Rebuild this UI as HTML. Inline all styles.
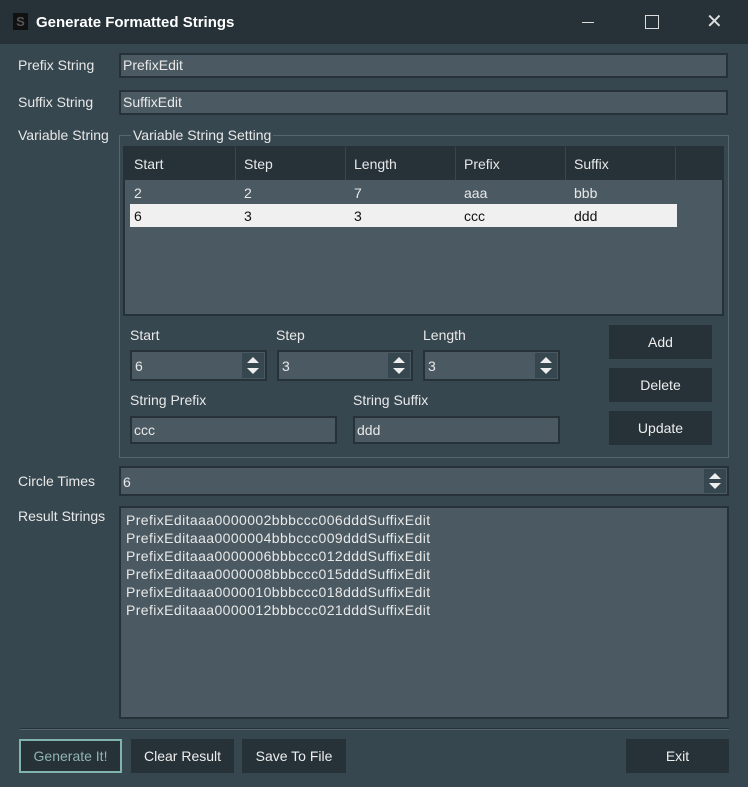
<!DOCTYPE html>
<html><head><meta charset="utf-8"><style>
*{box-sizing:border-box;margin:0;padding:0}
body{width:748px;height:787px;background:#37474f;font-family:"Liberation Sans",sans-serif;font-size:14px;color:#e8e8e8;position:relative;overflow:hidden}
.a{position:absolute}
.t{position:absolute;white-space:nowrap;line-height:16px}
.in{position:absolute;background:#4b5a62;border:2px solid #263238;padding-left:2px;line-height:21px}
.btn{position:absolute;background:#263238;text-align:center;color:#eee}
.spin{position:absolute;background:#4b5a62;border:2px solid #263238}
.arr{position:absolute;top:1px;bottom:1px;right:1px;width:22px;background:#37474f}
.arr:before{content:"";position:absolute;left:5px;top:4px;border-left:6px solid transparent;border-right:6px solid transparent;border-bottom:6px solid #eee}
.arr:after{content:"";position:absolute;left:5px;bottom:4px;border-left:6px solid transparent;border-right:6px solid transparent;border-top:6px solid #eee}
</style></head><body>
<div class="a" style="left:0;top:0;width:748px;height:44px;background:#263238"></div>
<div class="a" style="left:13px;top:13px;width:15px;height:17px;background:#111;color:#555;font-size:13px;font-weight:bold;text-align:center;line-height:17px">S</div>
<div class="t" style="left:36px;top:15px;font-weight:bold;font-size:15px;color:#fff">Generate Formatted Strings</div>
<div class="a" style="left:582px;top:22px;width:12px;height:1px;background:#ddd"></div>
<div class="a" style="left:645px;top:15px;width:14px;height:14px;border:1.5px solid #ddd"></div>
<div class="t" style="left:706px;top:12px;font-size:20px;color:#ddd;line-height:20px;font-weight:300">✕</div>

<div class="t" style="left:18px;top:57px">Prefix String</div>
<div class="in" style="left:119px;top:53px;width:609px;height:25px">PrefixEdit</div>
<div class="t" style="left:18px;top:94px">Suffix String</div>
<div class="in" style="left:119px;top:90px;width:609px;height:25px">SuffixEdit</div>
<div class="t" style="left:18px;top:127px">Variable String</div>

<div class="a" style="left:119px;top:135px;width:610px;height:323px;border:1px solid #56666e"></div>
<div class="t" style="left:131px;top:127px;background:#37474f;padding:0 2px">Variable String Setting</div>

<div class="a" style="left:123px;top:146px;width:601px;height:170px;background:#4b5a62;border:2px solid #263238"></div>
<div class="a" style="left:125px;top:147px;width:597px;height:33px;background:#263238"></div>
<div class="a" style="left:235px;top:147px;width:1px;height:33px;background:#37474f"></div>
<div class="a" style="left:345px;top:147px;width:1px;height:33px;background:#37474f"></div>
<div class="a" style="left:455px;top:147px;width:1px;height:33px;background:#37474f"></div>
<div class="a" style="left:565px;top:147px;width:1px;height:33px;background:#37474f"></div>
<div class="a" style="left:675px;top:147px;width:1px;height:33px;background:#37474f"></div>
<div class="t" style="left:134px;top:156px">Start</div>
<div class="t" style="left:244px;top:156px">Step</div>
<div class="t" style="left:354px;top:156px">Length</div>
<div class="t" style="left:464px;top:156px">Prefix</div>
<div class="t" style="left:574px;top:156px">Suffix</div>
<div class="t" style="left:134px;top:185px">2</div>
<div class="t" style="left:244px;top:185px">2</div>
<div class="t" style="left:354px;top:185px">7</div>
<div class="t" style="left:464px;top:185px">aaa</div>
<div class="t" style="left:574px;top:185px">bbb</div>
<div class="a" style="left:130px;top:204px;width:547px;height:23px;background:#f0f0f0"></div>
<div class="t" style="left:134px;top:208px;color:#111">6</div>
<div class="t" style="left:244px;top:208px;color:#111">3</div>
<div class="t" style="left:354px;top:208px;color:#111">3</div>
<div class="t" style="left:464px;top:208px;color:#111">ccc</div>
<div class="t" style="left:574px;top:208px;color:#111">ddd</div>

<div class="t" style="left:130px;top:327px">Start</div>
<div class="t" style="left:276px;top:327px">Step</div>
<div class="t" style="left:423px;top:327px">Length</div>
<div class="spin" style="left:130px;top:350px;width:137px;height:31px"><span class="t" style="left:3px;top:6px">6</span><div class="arr"></div></div>
<div class="spin" style="left:277px;top:350px;width:136px;height:31px"><span class="t" style="left:3px;top:6px">3</span><div class="arr"></div></div>
<div class="spin" style="left:423px;top:350px;width:137px;height:31px"><span class="t" style="left:3px;top:6px">3</span><div class="arr"></div></div>
<div class="t" style="left:130px;top:392px">String Prefix</div>
<div class="t" style="left:353px;top:392px">String Suffix</div>
<div class="in" style="left:130px;top:416px;width:207px;height:28px;line-height:24px">ccc</div>
<div class="in" style="left:353px;top:416px;width:207px;height:28px;line-height:24px">ddd</div>
<div class="btn" style="left:609px;top:325px;width:103px;height:34px;line-height:34px">Add</div>
<div class="btn" style="left:609px;top:368px;width:103px;height:34px;line-height:34px">Delete</div>
<div class="btn" style="left:609px;top:411px;width:103px;height:34px;line-height:34px">Update</div>

<div class="t" style="left:18px;top:473px">Circle Times</div>
<div class="spin" style="left:119px;top:466px;width:610px;height:30px"><span class="t" style="left:2px;top:6px">6</span><div class="arr"></div></div>

<div class="t" style="left:18px;top:508px">Result Strings</div>
<div class="a" style="left:119px;top:506px;width:610px;height:213px;background:#4b5a62;border:2px solid #263238;padding:3px 0 0 5px;line-height:18px;white-space:pre;letter-spacing:0.4px">PrefixEditaaa0000002bbbccc006dddSuffixEdit
PrefixEditaaa0000004bbbccc009dddSuffixEdit
PrefixEditaaa0000006bbbccc012dddSuffixEdit
PrefixEditaaa0000008bbbccc015dddSuffixEdit
PrefixEditaaa0000010bbbccc018dddSuffixEdit
PrefixEditaaa0000012bbbccc021dddSuffixEdit</div>

<div class="a" style="left:20px;top:728px;width:709px;height:2px;background:#263238;border-bottom:1px solid #56666e"></div>
<div class="btn" style="left:19px;top:739px;width:103px;height:34px;line-height:30px;border:2px solid #7fb5ad;color:#8fb5ad">Generate It!</div>
<div class="btn" style="left:131px;top:739px;width:103px;height:34px;line-height:34px">Clear Result</div>
<div class="btn" style="left:242px;top:739px;width:104px;height:34px;line-height:34px">Save To File</div>
<div class="btn" style="left:626px;top:739px;width:103px;height:34px;line-height:34px">Exit</div>
</body></html>
